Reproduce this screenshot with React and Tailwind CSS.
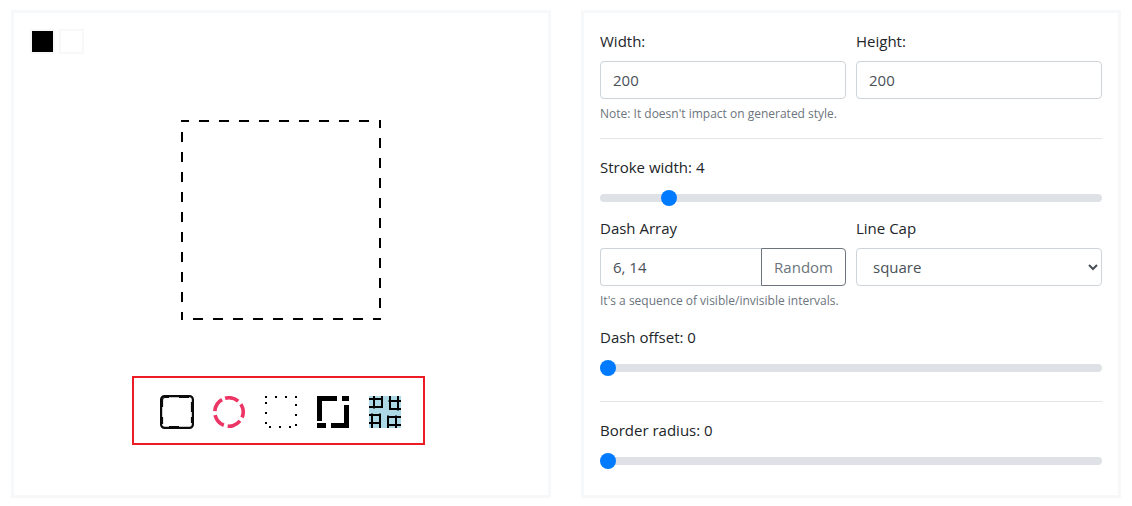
import { useState } from "react";

const control =
  "h-[38px] w-full min-w-0 rounded border border-[#ced4da] bg-white px-3 text-[#495057] outline-none";
const note = "mt-1.5 block text-xs leading-[17px] text-[#6c757d]";

function Slider({ id, label, value, max, onChange, className }) {
  return (
    <div className={className}>
      <label htmlFor={id} className="mb-[7px] block">
        {label}: {value}
      </label>
      <input
        id={id}
        type="range"
        min="0"
        max={max}
        value={value}
        onChange={(e) => onChange(Number(e.target.value))}
        className="block h-6 w-full appearance-none bg-transparent [&::-webkit-slider-runnable-track]:h-2 [&::-webkit-slider-runnable-track]:rounded-full [&::-webkit-slider-runnable-track]:bg-[#dee2e6] [&::-webkit-slider-thumb]:-mt-1 [&::-webkit-slider-thumb]:h-4 [&::-webkit-slider-thumb]:w-4 [&::-webkit-slider-thumb]:appearance-none [&::-webkit-slider-thumb]:rounded-full [&::-webkit-slider-thumb]:bg-[#007bff]"
      />
    </div>
  );
}

function Preset({ label, children }) {
  return (
    <button type="button" aria-label={label} className="size-8 shrink-0">
      {children}
    </button>
  );
}

function Presets() {
  return (
    <div className="mr-[5px] flex gap-5 border-2 border-[#ed1c24] pt-[18px] pr-[22px] pb-[15px] pl-[27px]">
      <Preset label="Rounded double dash">
        <svg viewBox="0 0 32 32" className="size-8 overflow-visible" fill="none" stroke="#0a0a0a">
          <rect x="0.1" y="0.1" width="31.8" height="31.8" rx="3.5" strokeWidth="2.2" />
          <path
            d="M1.5 11V4Q1.5 1.5 4 1.5H8M18 1.5H28M30.5 6V16M30.5 21V27M1.5 21V28M8 30.5H18"
            strokeWidth="1.2"
          />
        </svg>
      </Preset>
      <Preset label="Pink dashed circle">
        <svg viewBox="0 0 32 32" className="size-8" fill="none">
          <circle cx="16" cy="16" r="14.2" stroke="#ec3564" strokeWidth="3.6" strokeDasharray="13.9 3.944" transform="rotate(-106 16 16)" />
        </svg>
      </Preset>
      <Preset label="Dotted">
        <svg viewBox="0 0 32 32" className="size-8" shapeRendering="crispEdges">
          <path d="M0 0h2v2h-2zM10 0h2v2h-2zM20 0h2v2h-2zM30 0h2v2h-2zM30 8h2v2h-2zM30 18h2v2h-2zM30 28h2v2h-2zM24 30h2v2h-2zM14 30h2v2h-2zM4 30h2v2h-2zM0 26h2v2h-2zM0 16h2v2h-2zM0 6h2v2h-2z" />
        </svg>
      </Preset>
      <Preset label="Thick dash">
        <svg viewBox="0 0 32 32" className="size-8" shapeRendering="crispEdges">
          <path d="M0 0H20V5H5V25H0zM25 0h7v5h-7zM27 9h5v23H14v-5h13zM0 27h9v5H0z" />
        </svg>
      </Preset>
      <Preset label="Blue grid">
        <svg viewBox="0 0 32 32" className="size-8" shapeRendering="crispEdges">
          <rect width="32" height="32" fill="#add8e6" />
          <path d="M4 12h2v1h-2zM12 0h2v1h-2zM19 4h1v2h-1zM28 14h2v1h-2zM2 17h2v1h-2zM10 17h2v1h-2zM18 19h2v1h-2zM26 19h2v1h-2z" fill="#56707a" />
          <path
            d="M0 3H14M0 11H14M5 0V12M13 0V12M20 5H32M20 13H32M21 0V14M29 0V14M0 19H12M0 27H12M3 18V32M11 18V32M18 21H32M18 29H32M19 20V32M27 20V32"
            stroke="#000"
            strokeWidth="2"
            fill="none"
          />
        </svg>
      </Preset>
    </div>
  );
}

export default function App() {
  const [width, setWidth] = useState("200");
  const [height, setHeight] = useState("200");
  const [stroke, setStroke] = useState(4);
  const [dash, setDash] = useState("6, 14");
  const [cap, setCap] = useState("square");
  const [offset, setOffset] = useState(0);
  const [radius, setRadius] = useState(0);

  const randomDash = () =>
    setDash([1, 2].map(() => 1 + Math.floor(Math.random() * 30)).join(", "));

  return (
    <main className="grid grid-cols-2 gap-[30px] bg-white px-[11px] py-[10px] font-['Open_Sans','Noto_Sans',sans-serif] text-[15px] leading-6 text-[#212529]">
      <section className="flex flex-col border-[3px] border-[#f7f8fa] p-4">
        <div className="flex gap-1">
          <button type="button" aria-label="Stroke color" className="size-[25px] border-2 border-[#f7f8fa] bg-black" />
          <button type="button" aria-label="Background color" className="size-[25px] border-2 border-[#f7f8fa] bg-white" />
        </div>
        <div className="mt-[66px] flex flex-col items-center gap-14">
          <svg width={width} height={height} role="img" aria-label="Border preview">
            <rect
              width="100%"
              height="100%"
              rx={radius}
              fill="none"
              stroke="#000"
              strokeWidth={stroke}
              strokeDasharray={dash}
              strokeDashoffset={offset}
              strokeLinecap={cap}
            />
          </svg>
          <Presets />
        </div>
      </section>

      <section className="border-[3px] border-[#f7f8fa] px-4 pt-4 pb-[22px]">
        <div className="grid grid-cols-2 gap-x-[10px]">
          <div>
            <label htmlFor="width" className="mb-2 block">Width:</label>
            <input id="width" value={width} onChange={(e) => setWidth(e.target.value)} className={control} />
            <small className={note}>Note: It doesn't impact on generated style.</small>
          </div>
          <div>
            <label htmlFor="height" className="mb-2 block">Height:</label>
            <input id="height" value={height} onChange={(e) => setHeight(e.target.value)} className={control} />
          </div>
        </div>

        <hr className="my-4 border-[#e5e5e5]" />

        <Slider id="stroke" label="Stroke width" value={stroke} max="32" onChange={setStroke} />

        <div className="mt-1.5 grid grid-cols-2 gap-x-[10px]">
          <div>
            <label htmlFor="dash" className="mb-2 block">Dash Array</label>
            <div className="flex">
              <input
                id="dash"
                value={dash}
                onChange={(e) => setDash(e.target.value)}
                className="h-[38px] min-w-0 flex-1 rounded-l border border-r-0 border-[#ced4da] bg-white px-3 text-[#495057] outline-none"
              />
              <button
                type="button"
                onClick={randomDash}
                className="h-[38px] rounded-r border border-[#6c757d] px-3 text-[#6c757d]"
              >
                Random
              </button>
            </div>
            <small className={note}>It's a sequence of visible/invisible intervals.</small>
          </div>
          <div>
            <label htmlFor="cap" className="mb-2 block">Line Cap</label>
            <select id="cap" value={cap} onChange={(e) => setCap(e.target.value)} className={control}>
              <option>butt</option>
              <option>round</option>
              <option>square</option>
            </select>
          </div>
        </div>

        <Slider id="offset" label="Dash offset" value={offset} max="100" onChange={setOffset} className="mt-4" />

        <hr className="mt-[21px] mb-4 border-[#e5e5e5]" />

        <Slider id="radius" label="Border radius" value={radius} max="100" onChange={setRadius} />
      </section>
    </main>
  );
}
